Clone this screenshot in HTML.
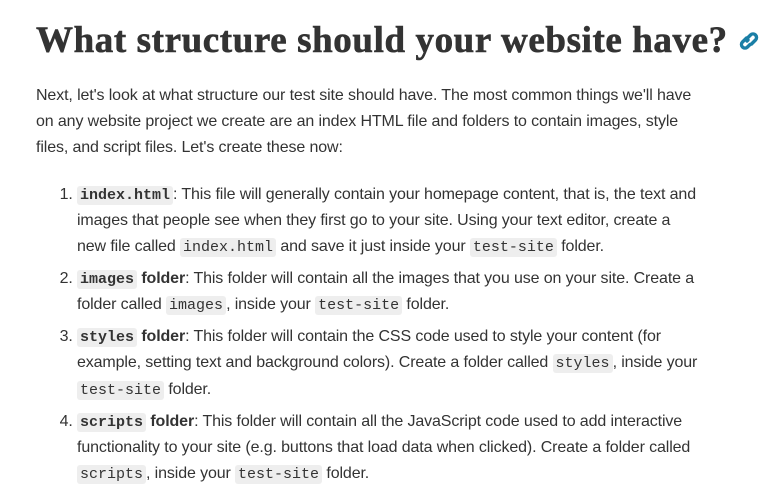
<!DOCTYPE html>
<html><head><style>
body{margin:0;background:#fff;width:776px;height:498px;overflow:hidden;color:#333;font-family:"Liberation Sans",sans-serif;}
h2{position:absolute;left:36px;top:16px;margin:0;font-family:"Liberation Serif",serif;font-weight:bold;font-size:37px;line-height:50px;color:#333;letter-spacing:0.6px;white-space:nowrap;-webkit-text-stroke:0.6px #333;}
p{position:absolute;left:36px;top:83px;margin:0;width:720px;font-size:16px;line-height:26px;letter-spacing:-0.12px;white-space:nowrap;}
ol{position:absolute;left:36px;top:182px;margin:0;padding-left:41px;width:680px;font-size:16px;line-height:25.4px;letter-spacing:-0.12px;white-space:nowrap;}
li{margin-bottom:5.5px;}
code{font-family:"Liberation Mono",monospace;font-size:15px;background:#eee;padding:1px 3px;border-radius:3px;letter-spacing:0;}
code.b{font-weight:bold;}
svg{position:absolute;left:736px;top:29px;}
</style></head><body>
<h2>What structure should your website have?</h2>
<svg width="26" height="24" viewBox="0 0 26 24"><g fill="none" stroke="#1b7fa6" stroke-width="3.4" stroke-linecap="round"><path d="M10.5 9 L6.5 13 A3.5 3.5 0 0 0 11.5 18 L14 15.5"/><path d="M12 11 L11 12"/><path d="M12 8.5 L14.5 6 A3.5 3.5 0 0 1 19.5 11 L15.5 15"/></g></svg>
<p>Next, let's look at what structure our test site should have. The most common things we'll have<br>on any website project we create are an index HTML file and folders to contain images, style<br>files, and script files. Let's create these now:</p>
<ol>
<li><code class="b">index.html</code>: This file will generally contain your homepage content, that is, the text and<br>images that people see when they first go to your site. Using your text editor, create a<br>new file called <code>index.html</code> and save it just inside your <code>test-site</code> folder.</li>
<li><code class="b">images</code> <b>folder</b>: This folder will contain all the images that you use on your site. Create a<br>folder called <code>images</code>, inside your <code>test-site</code> folder.</li>
<li><code class="b">styles</code> <b>folder</b>: This folder will contain the CSS code used to style your content (for<br>example, setting text and background colors). Create a folder called <code>styles</code>, inside your<br><code>test-site</code> folder.</li>
<li><code class="b">scripts</code> <b>folder</b>: This folder will contain all the JavaScript code used to add interactive<br>functionality to your site (e.g. buttons that load data when clicked). Create a folder called<br><code>scripts</code>, inside your <code>test-site</code> folder.</li>
</ol>
</body></html>
